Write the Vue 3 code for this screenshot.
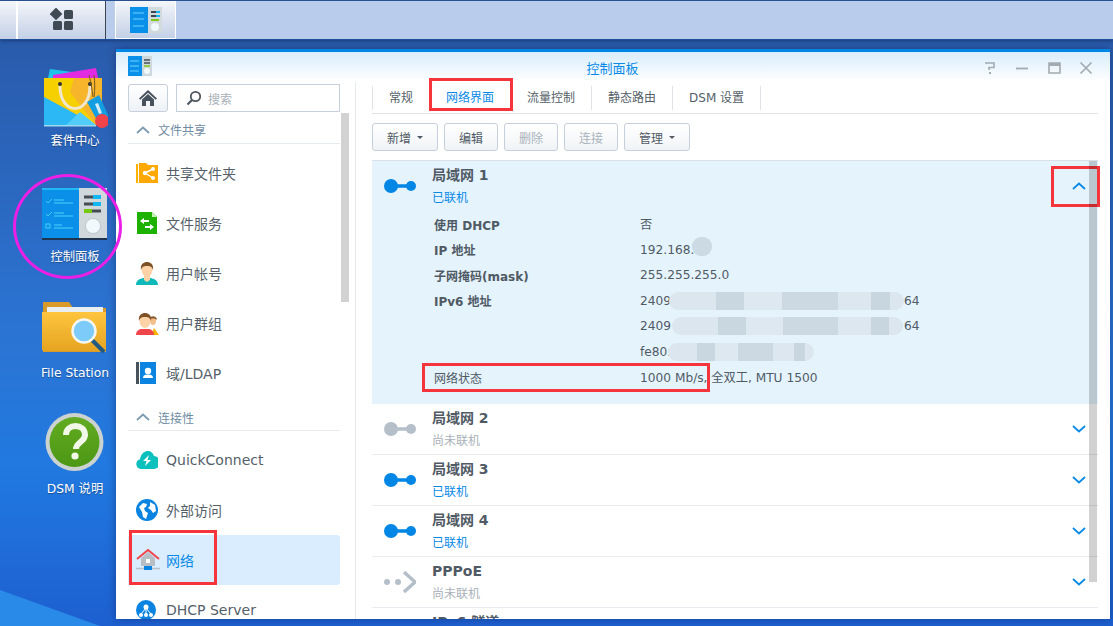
<script setup>
const group1 = [
  { icon: 'share', label: '共享文件夹' },
  { icon: 'file', label: '文件服务' },
  { icon: 'user', label: '用户帐号' },
  { icon: 'group', label: '用户群组' },
  { icon: 'ldap', label: '域/LDAP' },
]
const group2 = [
  { icon: 'quick', label: 'QuickConnect' },
  { icon: 'globe', label: '外部访问' },
  { icon: 'net', label: '网络', active: true },
  { icon: 'dhcp', label: 'DHCP Server' },
]
const tabs = ['常规', '网络界面', '流量控制', '静态路由', 'DSM 设置']
const collapsed = [
  { name: '局域网 2', status: '尚未联机', on: false },
  { name: '局域网 3', status: '已联机', on: true },
  { name: '局域网 4', status: '已联机', on: true },
  { name: 'PPPoE', status: '尚未联机', on: false, pppoe: true },
  { name: 'IPv6 隧道', status: '尚未联机', on: false, pppoe: true },
]
</script>

<template>
  <div class="desktop">
    <div class="bg-shard"></div>

    <header class="taskbar">
      <div class="tb-btn tb-edge"></div>
      <div class="tb-btn tb-main">
        <svg width="24" height="24" viewBox="0 0 24 24">
          <rect x="1.500" y="1.500" width="9" height="9" fill="#3f4a55" transform="rotate(45 6 6)" />
          <rect x="14" y="2" width="9" height="9" rx="1.500" fill="#3f4a55" />
          <rect x="3" y="13" width="9" height="9" rx="1.500" fill="#3f4a55" />
          <rect x="14" y="13" width="9" height="9" rx="1.500" fill="#3f4a55" />
        </svg>
      </div>
      <div class="tb-btn tb-app">
        <svg width="32" height="26" viewBox="0 0 32 26">
          <rect width="18" height="26" fill="#0a90e8" />
          <rect x="18" width="14" height="26" fill="#d3dadd" />
          <path d="M3 6h11M3 12h11M3 19h11" stroke="#6fd3ff" stroke-width="1" />
          <path d="M21 5h8M21 9h8" stroke="#3d474f" stroke-width="2" />
          <path d="M26 5h4M26 9h4" stroke="#18b6ee" stroke-width="2" />
          <path d="M21 13h8" stroke="#7ec81e" stroke-width="2" />
          <circle cx="25" cy="20" r="4" fill="#f1f8fc" />
        </svg>
      </div>
    </header>

    <nav class="icons">
      <div class="d-icon">
        <svg width="66" height="62" viewBox="0 0 66 62" class="pkg-big">
          <path d="M8 2l22 3v6H6z" fill="#1fc3ea" />
          <path d="M11 8l43-7 2 10H11z" fill="#e22be0" />
          <path d="M2 11h58v47H2z" fill="#f6b52a" />
          <path d="M2 11h30l-4 14 26 33L2 30z" fill="#f6d000" />
          <path d="M2 30l52 28H2z" fill="#2cb8f5" />
          <path d="M24 58l14-13 16 13z" fill="#52cdf9" />
          <path d="M2 58h52v1.500H2z" fill="#9fd8ef" />
          <path d="M18 19c0 30 30 30 30 0" fill="none" stroke="#f1e7cf" stroke-width="3" />
          <circle cx="18" cy="17" r="2" fill="#333" />
          <circle cx="48" cy="17" r="2" fill="#333" />
          <path d="M47 8c2 8 3 14 4 22M52 8c1 8 1 14 0 22" fill="none" stroke="#7a5a20" stroke-width="1" />
          <path d="M45 35l12-7 10 22-11 5z" fill="#139ee2" />
          <path d="M53 37l3-1 4 10-3 1z" fill="#d2ecf8" />
          <circle cx="60" cy="54" r="7" fill="#f0434a" />
        </svg>
        <span>套件中心</span>
      </div>
      <div class="d-icon">
        <svg width="66" height="58" viewBox="0 0 66 58" class="cp-big">
          <rect width="37" height="50" fill="#0a90e8" />
          <rect x="37" width="28" height="50" fill="#d0d8db" />
          <rect width="37" height="2" fill="#22b8f4" />
          <rect y="50" width="65" height="2" fill="#1d3550" />
          <path d="M4 13l2 2 4-4M4 26l2 2 4-4" stroke="#49c7f7" fill="none" />
          <rect x="4" y="36" width="4" height="4" fill="none" stroke="#49c7f7" />
          <path d="M12 12h10M12 15h19M12 25h10M12 28h19M12 37h8M12 40h19" stroke="#49d2fb" />
          <path d="M42 9h17M42 16h17" stroke="#444d54" stroke-width="3" />
          <path d="M51 9h8M51 16h8" stroke="#12b6f0" stroke-width="4" />
          <path d="M42 23h17" stroke="#444d54" stroke-width="3" />
          <path d="M42 23h8" stroke="#77c90f" stroke-width="4" />
          <circle cx="51" cy="38" r="7.500" fill="#f2f9fd" stroke="#aab4ba" stroke-width=".6" />
        </svg>
        <span>控制面板</span>
      </div>
      <div class="d-icon">
        <svg width="66" height="56" viewBox="0 0 66 56" class="fs-big">
          <defs>
            <linearGradient id="fold" x1="0" y1="0" x2="0" y2="1">
              <stop offset="0" stop-color="#ffc53f" />
              <stop offset="1" stop-color="#e5a421" />
            </linearGradient>
          </defs>
          <path d="M1 2h26l4 6h33v44H1z" fill="#d89a2a" />
          <rect x="5" y="7" width="56" height="7" fill="#e9eef0" />
          <path d="M0 12h64v37a2 2 0 0 1-2 2H2a2 2 0 0 1-2-2z" fill="url(#fold)" />
          <path d="M50 40l12 12" stroke="#1e5a84" stroke-width="4" />
          <circle cx="42" cy="31" r="11.500" fill="#7dcbf9" stroke="#f6f6ee" stroke-width="2.500" />
        </svg>
        <span>File Station</span>
      </div>
      <div class="d-icon">
        <svg width="60" height="60" viewBox="0 0 60 60" class="help-big">
          <defs>
            <linearGradient id="helpg" x1="0" y1="0" x2="0" y2="1">
              <stop offset="0" stop-color="#62ab22" />
              <stop offset="1" stop-color="#4c9714" />
            </linearGradient>
          </defs>
          <circle cx="29.500" cy="30" r="29" fill="#ccd2cf" />
          <circle cx="29.500" cy="30" r="25" fill="url(#helpg)" />
          <path d="M21 23c0-12 19-12 19 0 0 7-9 7-9 14" fill="none" stroke="#f2f8e8" stroke-width="6" />
          <circle cx="30" cy="44" r="3.600" fill="#f2f8e8" />
        </svg>
        <span>DSM 说明</span>
      </div>
    </nav>

    <section class="window">
      <div class="titlebar">
        <svg width="24" height="21" viewBox="0 0 24 21">
          <rect width="14" height="20" fill="#0a90e8" />
          <rect x="14" width="10" height="20" fill="#cfd8dc" />
          <path d="M2 5h9M2 10h9M2 15h9" stroke="#6fd3ff" />
          <path d="M16 4h6M16 7h6" stroke="#444d54" stroke-width="1.500" />
          <path d="M16 10h6" stroke="#7ec81e" stroke-width="1.500" />
          <circle cx="19" cy="15" r="3" fill="#f1f8fc" />
        </svg>
        <div class="win-title">控制面板</div>
        <div class="win-btns">
          <svg width="14" height="14" viewBox="0 0 14 14"><path d="M2 2h9v4.500H6V9" fill="none" stroke="#a3abb1" stroke-width="1.600" /><path d="M6 11h2v2H6z" fill="#a3abb1" /></svg>
          <svg width="14" height="14" viewBox="0 0 14 14"><path d="M1 7.500h12" stroke="#a3abb1" stroke-width="1.800" /></svg>
          <svg width="14" height="14" viewBox="0 0 14 14"><path d="M2 2h11v10H2z" fill="none" stroke="#a3abb1" stroke-width="1.600" /><path d="M2 3.500h11" stroke="#a3abb1" stroke-width="3" /></svg>
          <svg width="14" height="14" viewBox="0 0 14 14"><path d="M1.500 1.500l11 11M12.500 1.500l-11 11" stroke="#a3abb1" stroke-width="1.700" /></svg>
        </div>
      </div>

      <div class="win-body">
        <aside class="sidebar">
          <div class="side-top">
            <button class="home">
              <svg width="20" height="18" viewBox="0 0 20 18"><path d="M10 1L1 9.500l1.300 1.300L10 3.700l7.700 7.100L19 9.500z" fill="#48525c" /><path d="M4 10.500L10 5l6 5.500V17h-4v-5H8v5H4z" fill="#48525c" /></svg>
            </button>
            <div class="search">
              <svg width="16" height="16" viewBox="0 0 16 16"><circle cx="9.500" cy="6.500" r="4.700" fill="none" stroke="#4d565f" stroke-width="1.800" /><path d="M6 10l-4.500 4.500" stroke="#4d565f" stroke-width="2.200" /></svg>
              <span>搜索</span>
            </div>
          </div>
          <div class="scroll-thumb"></div>

          <div class="group-head">
            <svg width="14" height="8" viewBox="0 0 14 8"><path d="M1 7l6-5.500L13 7" fill="none" stroke="#7d9bb3" stroke-width="1.800" /></svg>
            <span>文件共享</span>
          </div>
          <div v-for="it in group1" :key="it.label" class="nav-item">
            <span class="nav-ico">
              <svg v-if="it.icon === 'share'" width="22" height="20" viewBox="0 0 22 20"><path d="M0 1h2v19H0z" fill="#ffb300" /><path d="M3 0h7l2 2h10v18H3z" fill="#ffa800" /><path d="M9 10l8-4M9 10l8 5" stroke="#fff" stroke-width="1.400" /><circle cx="9" cy="10" r="2.200" fill="#fff" /><circle cx="17" cy="6" r="2" fill="#fff" /><circle cx="17" cy="15" r="2" fill="#fff" /></svg>
              <svg v-else-if="it.icon === 'file'" width="22" height="22" viewBox="0 0 22 22"><path d="M1 0h15l5 5v17H1z" fill="#1eb100" /><path d="M16 0l5 5h-5z" fill="#c6f0b8" /><path d="M4 9l4-3v2h5v2H8v2zM18 15l-4 3v-2H9v-2h5v-2z" fill="#fff" /></svg>
              <svg v-else-if="it.icon === 'user'" width="22" height="23" viewBox="0 0 22 23"><path d="M0 23c0-5 4-6 7-7h8c3 1 7 2 7 7z" fill="#0fb9b9" /><path d="M8 12h6v6l-3 2-3-2z" fill="#fcd2a6" /><ellipse cx="11" cy="7.500" rx="5.500" ry="7" fill="#fcd2a6" /><path d="M5 8C4 2 8 0 11 0s7 2 6 8c-1-3-2-4-6-4S6 5 5 8z" fill="#7e5126" /></svg>
              <svg v-else-if="it.icon === 'group'" width="23" height="23" viewBox="0 0 23 23"><path d="M14 8c0-4 6-4 6 0 0 3-1 5-3 5s-3-2-3-5z" fill="#f3be88" /><path d="M13 8c0-5 8-5 8 0-2-2-6-2-8 0z" fill="#8a5a2c" /><path d="M15 23l3-7 5 7z" fill="#f5b400" /><path d="M0 23c0-5 4-6 6-6h6c2 0 6 1 6 6z" fill="#f1454c" /><ellipse cx="9" cy="9" rx="5.500" ry="7" fill="#fcd2a6" /><path d="M3 9C2 3 6 1 9 1s7 2 6 8c-1-3-2-4-6-4S4 6 3 9z" fill="#7e5126" /></svg>
              <svg v-else width="21" height="22" viewBox="0 0 21 22"><rect width="3" height="22" fill="#48525c" /><rect x="4" width="16" height="22" fill="#0a84e0" /><circle cx="12" cy="9" r="3.200" fill="#fff" /><path d="M7 16c0-3 2.500-3.500 5-3.500s5 .5 5 3.500z" fill="#fff" /></svg>
            </span>
            <span>{{ it.label }}</span>
          </div>

          <div class="group-head second">
            <svg width="14" height="8" viewBox="0 0 14 8"><path d="M1 7l6-5.500L13 7" fill="none" stroke="#7d9bb3" stroke-width="1.800" /></svg>
            <span>连接性</span>
          </div>
          <div v-for="it in group2" :key="it.label" class="nav-item" :class="{ active: it.active }">
            <span class="nav-ico">
              <svg v-if="it.icon === 'quick'" width="22" height="18" viewBox="0 0 22 18"><path d="M5 18a5 5 0 0 1-1-9.800C5 2 9 0 12 0c3 0 5 2 6 5a6.500 6.500 0 0 1-1 13z" fill="#0cc0bd" /><path d="M13 4L7 10h3.500L9 15l6-6h-3.500z" fill="#fff" /></svg>
              <svg v-else-if="it.icon === 'globe'" width="22" height="22" viewBox="0 0 22 22"><circle cx="11" cy="11" r="11" fill="#0a84e0" /><path d="M3 8l4-4 4 1-1 3-2 1 1 3 3 2-2 6-3-2-1-5zM14 3l5 3 1 6-3 2-2-3-3-2 2-2z" fill="#fff" /></svg>
              <svg v-else-if="it.icon === 'net'" width="24" height="22" viewBox="0 0 24 22"><path d="M5 9l7-6 7 6v8H5z" fill="#b7bec6" /><path d="M1 10l11-9 11 9" fill="none" stroke="#f1454c" stroke-width="2" /><rect x="10" y="10" width="4" height="4" fill="#fff" /><path d="M0 19.500h24" stroke="#b7bec6" stroke-width="1.500" /><rect x="8" y="17" width="8" height="4" fill="#0a84e0" /></svg>
              <svg v-else width="20" height="20" viewBox="0 0 20 20"><circle cx="10" cy="10" r="10" fill="#0a84e0" /><circle cx="10" cy="7" r="2.500" fill="#fff" /><path d="M10 8l-5 6M10 8v6M10 8l5 6" stroke="#fff" /><circle cx="5" cy="15" r="2" fill="#fff" /><circle cx="10" cy="15" r="2" fill="#fff" /><circle cx="15" cy="15" r="2" fill="#fff" /></svg>
            </span>
            <span>{{ it.label }}</span>
          </div>
        </aside>

        <main class="content">
          <div class="tabs">
            <div
              v-for="(t, i) in tabs"
              :key="t"
              class="tab"
              :class="{ current: i === 1, plain: i === 0 }"
            >{{ t }}</div>
          </div>

          <div class="toolbar">
            <button class="btn">新增<i class="caret"></i></button>
            <button class="btn">编辑</button>
            <button class="btn off">删除</button>
            <button class="btn off">连接</button>
            <button class="btn">管理<i class="caret"></i></button>
          </div>

          <div class="list">
            <div class="list-scroll"></div>
            <div class="lan open">
              <div class="lan-head">
                <span class="lan-ico">
                  <svg width="32" height="14" viewBox="0 0 32 14"><circle cx="7" cy="7" r="7" fill="#0086e5" /><circle cx="27" cy="7" r="5" fill="#0086e5" /><path d="M7 7h20" stroke="#0086e5" stroke-width="3.500" /></svg>
                </span>
                <div class="lan-text">
                  <div class="lan-name">局域网 1</div>
                  <div class="lan-status on">已联机</div>
                </div>
                <svg class="chev" width="14" height="8" viewBox="0 0 14 8"><path d="M1 7l6-5.500L13 7" fill="none" stroke="#0a8ae6" stroke-width="1.800" /></svg>
              </div>
              <div class="info">
                <div class="k">使用 DHCP</div><div class="v">否</div>
                <div class="k">IP 地址</div><div class="v">192.168.<i class="blot small"></i></div>
                <div class="k">子网掩码(mask)</div><div class="v">255.255.255.0</div>
                <div class="k">IPv6 地址</div><div class="v">2409<i class="blot long"></i>64</div>
                <div class="k"></div><div class="v">2409<i class="blot long alt"></i>64</div>
                <div class="k"></div><div class="v">fe80:<i class="blot mid"></i></div>
                <div class="k normal">网络状态</div><div class="v">1000 Mb/s, 全双工, MTU 1500</div>
              </div>
            </div>

            <div v-for="l in collapsed" :key="l.name" class="lan">
              <div class="lan-head">
                <span class="lan-ico">
                  <svg v-if="l.pppoe" width="32" height="24" viewBox="0 0 32 24"><circle cx="3" cy="12" r="3" fill="#b5bfca" /><circle cx="14" cy="12" r="3" fill="#b5bfca" /><path d="M20 2l11 10-11 10" fill="none" stroke="#b5bfca" stroke-width="3.500" /></svg>
                  <svg v-else width="32" height="14" viewBox="0 0 32 14"><circle cx="7" cy="7" r="7" :fill="l.on ? '#0086e5' : '#b5bfca'" /><circle cx="27" cy="7" r="5" :fill="l.on ? '#0086e5' : '#b5bfca'" /><path d="M7 7h20" :stroke="l.on ? '#0086e5' : '#b5bfca'" stroke-width="3.500" /></svg>
                </span>
                <div class="lan-text">
                  <div class="lan-name">{{ l.name }}</div>
                  <div class="lan-status" :class="{ on: l.on }">{{ l.status }}</div>
                </div>
                <svg class="chev" width="14" height="8" viewBox="0 0 14 8"><path d="M1 1l6 5.500L13 1" fill="none" stroke="#0a8ae6" stroke-width="1.800" /></svg>
              </div>
            </div>
          </div>
        </main>
      </div>

      <!-- red annotation boxes drawn on the screenshot -->
      <div class="mark m-tab"></div>
      <div class="mark m-chev"></div>
      <div class="mark m-state"></div>
      <div class="mark m-net"></div>
    </section>

    <div class="ring"></div>
  </div>
</template>

<style>
html, body { margin: 0; overflow: hidden; }
</style>

<style scoped>
* { box-sizing: border-box; }

.desktop {
  position: relative;
  width: 1113px;
  height: 626px;
  overflow: hidden;
  background: linear-gradient(180deg, #2a5bab 40px, #2b74d3 330px, #2179e0 470px, #1d5fd0 626px);
  font-family: "DejaVu Sans", "Noto Sans CJK SC", sans-serif;
  font-size: 13px;
  color: #505a64;
}

.bg-shard {
  position: absolute;
  left: 0;
  bottom: 0;
  width: 100px;
  height: 36px;
  background: #2a8ae8;
  clip-path: polygon(0 0, 100% 100%, 0 100%);
}

.taskbar {
  position: relative;
  display: flex;
  height: 40px;
  background: #b9cceb;
  border-top: 1px solid #26508f;
  border-bottom: 1px solid #1d4f9c;
  box-shadow: 0 1px 3px rgba(15, 40, 90, 0.6);
}
.tb-btn {
  height: 38px;
  display: flex;
  align-items: center;
  justify-content: center;
  background: linear-gradient(180deg, #f4f6fa, #c3d0e6);
}
.tb-edge { width: 17px; border-right: 1px solid #fff; }
.tb-main { width: 89px; border-left: 1px solid #fff; border-right: 1px solid #3c4450; }
.tb-app {
  width: 61px;
  margin-left: 9px;
  border: 1px solid #fff;
  border-top: 0;
}

.icons {
  position: absolute;
  left: 0;
  top: 34px;
  display: grid;
  grid-auto-rows: 116px;
  width: 150px;
}
.d-icon {
  display: flex;
  flex-direction: column;
  align-items: center;
  justify-content: flex-end;
  color: #fff;
  font-size: 12.300px;
  line-height: 18px;
  text-shadow: 0 1px 1px rgba(0, 0, 0, 0.35);
}
.d-icon span { margin-top: 1px; }
.pkg-big { margin-bottom: 2px; }
.cp-big { margin-bottom: 1px; }
.fs-big { margin-bottom: 7px; }
.help-big { margin-bottom: 7px; }

.ring {
  position: absolute;
  left: 13px;
  top: 174px;
  width: 109px;
  height: 105px;
  border: 3px solid #ec1fe6;
  border-radius: 50%;
}

.window {
  position: absolute;
  left: 116px;
  top: 49px;
  width: 994px;
  height: 570px;
  background: #fff;
  border-top: 3px solid #0086e5;
  display: flex;
  flex-direction: column;
  box-shadow: 0 0 8px rgba(0, 0, 40, 0.35);
}

.titlebar {
  position: relative;
  flex: none;
  height: 30px;
  padding: 4px 12px;
  background: linear-gradient(180deg, #d8edfb, #fff);
}
.win-title {
  position: absolute;
  left: 0;
  right: 1px;
  top: 6px;
  text-align: center;
  color: #0a8ae6;
  font-size: 13px;
}
.win-btns {
  position: absolute;
  right: 17px;
  top: 9px;
  display: flex;
  gap: 18px;
}

.win-body {
  flex: 1;
  display: flex;
  min-height: 0;
}

.sidebar {
  position: relative;
  flex: none;
  width: 240px;
  padding: 2px 15px 0 12px;
  border-right: 1px solid #e5e8ec;
  overflow: hidden;
}
.side-top {
  display: flex;
  gap: 8px;
}
.home {
  width: 40px;
  height: 28px;
  padding: 0;
  display: flex;
  align-items: center;
  justify-content: center;
  background: linear-gradient(180deg, #fff, #eef2f6);
  border: 1px solid #c6d0dc;
  border-radius: 3px;
}
.search {
  width: 164px;
  height: 28px;
  display: flex;
  align-items: center;
  gap: 6px;
  padding-left: 9px;
  border: 1px solid #c6d0dc;
  color: #a9b0b8;
  font-size: 12px;
}
.scroll-thumb {
  position: absolute;
  left: 225px;
  top: 31px;
  width: 8px;
  height: 189px;
  background: #d2d2d2;
}

.group-head {
  display: flex;
  align-items: center;
  gap: 8px;
  height: 32px;
  padding: 4px 0 0 8px;
  border-bottom: 1px solid #e6ebf0;
  color: #6f8ba3;
  font-size: 12px;
}
.group-head.second {
  height: 31px;
  margin-top: 2px;
}

.nav-item {
  display: flex;
  align-items: center;
  height: 50px;
  padding-left: 8px;
  font-size: 14px;
  color: #555f69;
  border-radius: 3px;
}
.group-head + .nav-item { margin-top: 4px; }
.nav-item.active {
  background: #d9edff;
  color: #0a8ae6;
}
.nav-ico {
  width: 30px;
  display: flex;
  align-items: center;
  flex: none;
}

.content {
  flex: 1;
  min-width: 0;
  padding: 0 12px 0 16px;
  overflow: hidden;
}
.tabs {
  display: flex;
  height: 32px;
  border-bottom: 1px solid #dfe3e7;
  align-items: center;
  font-size: 12px;
}
.tab {
  height: 24px;
  line-height: 24px;
  padding: 0 16px;
  border-right: 1px solid #dfe3e7;
  color: #555f69;
}
.tab.plain { border-left: 1px solid #dfe3e7; width: 58px; }
.tab.current { color: #0a8ae6; border-right: 0; width: 81px; }

.toolbar {
  display: flex;
  gap: 6px;
  margin-top: 9px;
}
.btn {
  height: 28px;
  padding: 0 14px;
  display: flex;
  align-items: center;
  gap: 6px;
  font: inherit;
  font-size: 12px;
  color: #505a64;
  background: linear-gradient(180deg, #fff, #f0f3f6);
  border: 1px solid #c6d0dc;
  border-radius: 3px;
}
.btn.off { color: #aab3bc; }
.caret {
  width: 0;
  height: 0;
  border: 3px solid transparent;
  border-top: 3px solid #505a64;
  border-bottom: 0;
}

.list {
  position: relative;
  margin-top: 9px;
  border-top: 1px solid #d9e0e6;
}
.list-scroll {
  position: absolute;
  right: 1px;
  top: 0;
  width: 8px;
  height: 421px;
  background: rgba(0, 0, 0, 0.18);
  z-index: 1;
}
.lan {
  height: 51px;
  border-bottom: 1px solid #e8ecf0;
  background: #fff;
}
.lan.open {
  height: 243px;
  background: #e5f3fd;
  border-bottom: 0;
}
.lan-head {
  position: relative;
  display: flex;
  height: 50px;
  padding-left: 12px;
  align-items: center;
}
.lan-ico {
  width: 48px;
  display: flex;
  flex: none;
}
.lan-text { line-height: 23px; padding-top: 1px; }
.lan-name {
  font-size: 14px;
  font-weight: 700;
  color: #505a64;
}
.lan-status {
  font-size: 12px;
  color: #a9b0b8;
}
.lan-status.on { color: #0a8ae6; }
.chev {
  position: absolute;
  right: 12px;
  top: 21px;
  z-index: 2;
}

.info {
  display: grid;
  grid-template-columns: 206px 1fr;
  grid-auto-rows: 25.500px;
  margin-top: .4px;
  padding-left: 62px;
  font-size: 12px;
  align-items: center;
}
.k { font-weight: 700; }
.k.normal { font-weight: 400; }
.v { display: flex; align-items: center; white-space: pre; font-size: 12.200px; }
.blot {
  display: inline-block;
  height: 18px;
  border-radius: 9px;
  background: linear-gradient(90deg, #dbe6ee 0 20%, #c9d7e0 20% 32%, #dde8f0 32% 48%, #cdd9e2 48% 72%, #dce7ef 72% 86%, #c8d6df 86% 94%, #dbe6ee 94%);
}
.blot.small { width: 20px; height: 19px; background: #ccdae3; margin: -6px 0 0 -2px; }
.blot.long { width: 235px; margin-left: -2px; }
.blot.long.alt { width: 231px; margin-left: 1px; margin-right: 1px; }
.blot.mid { width: 146px; margin-left: -3px; }

.mark {
  position: absolute;
  border: 3px solid #f5343c;
  pointer-events: none;
}
.m-tab { left: 313px; top: 26px; width: 84px; height: 33px; }
.m-chev { left: 935px; top: 114px; width: 49px; height: 41px; }
.m-state { left: 306px; top: 311px; width: 288px; height: 29px; }
.m-net { left: 13px; top: 478px; width: 88px; height: 55px; }
</style>
